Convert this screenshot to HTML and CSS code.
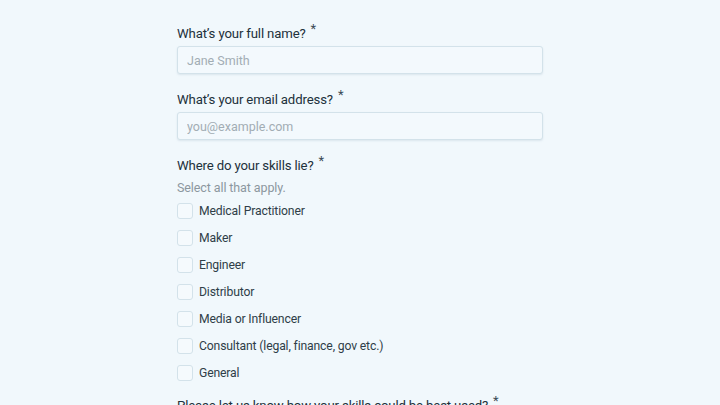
FILE: index.html
```html
<!DOCTYPE html>
<html>
<head>
<meta charset="utf-8">
<link rel="stylesheet" href="styles.css">
</head>
<body>
<form class="form">
  <div class="field">
    <label class="label">What’s your full name?<span class="req">*</span></label>
    <input class="input" type="text" placeholder="Jane Smith">
  </div>
  <div class="field">
    <label class="label">What’s your email address?<span class="req">*</span></label>
    <input class="input" type="text" placeholder="you@example.com">
  </div>
  <div class="field">
    <label class="label">Where do your skills lie?<span class="req">*</span></label>
    <div class="hint">Select all that apply.</div>
    <div class="checks">
      <label class="check"><span class="box"></span>Medical Practitioner</label>
      <label class="check"><span class="box"></span>Maker</label>
      <label class="check"><span class="box"></span>Engineer</label>
      <label class="check"><span class="box"></span>Distributor</label>
      <label class="check"><span class="box"></span>Media or Influencer</label>
      <label class="check"><span class="box"></span>Consultant (legal, finance, gov etc.)</label>
      <label class="check"><span class="box"></span>General</label>
    </div>
  </div>
  <div class="field last">
    <label class="label">Please let us know how your skills could be best used?<span class="req">*</span></label>
  </div>
</form>
</body>
</html>
```
FILE: styles.css
```css
html, body {
  margin: 0;
  padding: 0;
  background: #f1f8fc;
  font-family: "Roboto", "Inter", sans-serif;
  color: #2b3b47;
}
.form {
  width: 366px;
  margin: 0 auto;
  padding-top: 24px;
  display: flex;
  flex-direction: column;
  gap: 16px;
}
.field {
  display: flex;
  flex-direction: column;
}
.field.last {
  margin-top: -3px;
}
.label {
  display: block;
  height: 20px;
  font-size: 13.2px;
  line-height: 20px;
  letter-spacing: -0.15px;
  color: #22313b;
  margin-bottom: 2px;
}
.req {
  font-size: 13px;
  line-height: 0;
  position: relative;
  top: -5px;
  margin-left: 5px;
  color: #3c4b55;
}
.input {
  box-sizing: border-box;
  height: 28px;
  width: 100%;
  border: 1px solid #d3e2ea;
  border-radius: 3px;
  background: #f3f9fd;
  box-shadow: 0 1px 2px rgba(120, 150, 170, 0.18);
  padding: 0 9px;
  font-family: inherit;
  font-size: 12.5px;
  color: #2b3b47;
  outline: none;
}
.input::placeholder {
  color: #a2adb4;
}
.hint {
  height: 20px;
  font-size: 12.5px;
  line-height: 20px;
  color: #8c979f;
  letter-spacing: -0.1px;
  margin-bottom: 3px;
}
.checks {
  display: flex;
  flex-direction: column;
  gap: 7px;
}
.check {
  display: flex;
  align-items: center;
  gap: 6px;
  height: 20px;
  font-size: 12.2px;
  line-height: 20px;
  letter-spacing: -0.15px;
  color: #2f3e48;
}
.box {
  box-sizing: border-box;
  width: 16px;
  height: 16px;
  border: 1px solid #d3e2ea;
  border-radius: 3px;
  background: #f5fafd;
  flex: none;
}
```
